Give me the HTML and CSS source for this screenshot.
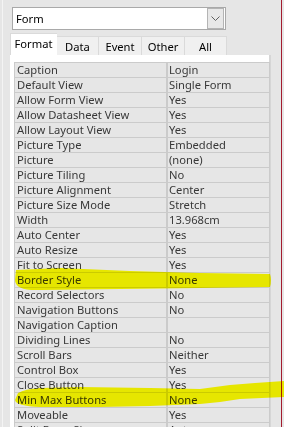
FILE: index.html
```html
<!DOCTYPE html>
<html lang="en">
<head>
  <meta charset="UTF-8">
  <meta name="viewport" content="width=device-width, initial-scale=1.0">
  <title>Property Sheet</title>
  <link rel="stylesheet" href="styles.css">
</head>
<body>
  <div class="window">
    <div class="pane">
      <div class="combo">
        <span class="combo-text">Form</span>
        <span class="combo-btn">
          <svg width="9" height="5" viewBox="0 0 9 5"><path d="M0.5 0.5 L4.5 4.5 L8.5 0.5" fill="none" stroke="#606060" stroke-width="1"/></svg>
        </span>
      </div>

      <div class="tabs">
        <div class="tab active">Format</div>
        <div class="tab">Data</div>
        <div class="tab">Event</div>
        <div class="tab">Other</div>
        <div class="tab">All</div>
      </div>

      <div class="panel">
        <div class="props">
          <div class="label">Caption</div><div class="value">Login</div>
          <div class="label">Default View</div><div class="value">Single Form</div>
          <div class="label">Allow Form View</div><div class="value">Yes</div>
          <div class="label">Allow Datasheet View</div><div class="value">Yes</div>
          <div class="label">Allow Layout View</div><div class="value">Yes</div>
          <div class="label">Picture Type</div><div class="value">Embedded</div>
          <div class="label">Picture</div><div class="value">(none)</div>
          <div class="label">Picture Tiling</div><div class="value">No</div>
          <div class="label">Picture Alignment</div><div class="value">Center</div>
          <div class="label">Picture Size Mode</div><div class="value">Stretch</div>
          <div class="label">Width</div><div class="value">13.968cm</div>
          <div class="label">Auto Center</div><div class="value">Yes</div>
          <div class="label">Auto Resize</div><div class="value">Yes</div>
          <div class="label">Fit to Screen</div><div class="value">Yes</div>
          <div class="label">Border Style</div><div class="value">None</div>
          <div class="label">Record Selectors</div><div class="value">No</div>
          <div class="label">Navigation Buttons</div><div class="value">No</div>
          <div class="label">Navigation Caption</div><div class="value"></div>
          <div class="label">Dividing Lines</div><div class="value">No</div>
          <div class="label">Scroll Bars</div><div class="value">Neither</div>
          <div class="label">Control Box</div><div class="value">Yes</div>
          <div class="label">Close Button</div><div class="value">Yes</div>
          <div class="label">Min Max Buttons</div><div class="value">None</div>
          <div class="label">Moveable</div><div class="value">Yes</div>
          <div class="label">Split Form Size</div><div class="value">Auto</div>
        </div>
      </div>
    </div>

    <!-- highlighter marks drawn over the sheet -->
    <svg class="marker" width="284" height="427" viewBox="0 0 284 427">
      <path d="M16 270 L60 268 L130 271 L200 273 L270 274 Q272 280 270 287 L200 288 L120 289 L40 290 Q15 291 15 280 Z" fill="#ffff00"/>
      <path d="M18 393 Q25 389 40 388 L80 387 L150 388 L200 389 L230 385 L255 383 L284 381 L284 397 L262 398 L240 399 L220 402 L200 404 L150 406 L100 407 L40 407 Q16 406 15 400 Z" fill="#ffff00"/>
    </svg>
  </div>
</body>
</html>
```

FILE: styles.css
```css
body {
  margin: 0;
  background: #e6e6e6;
  font-family: "Noto Sans", "Open Sans", sans-serif;
  font-size: 11.2px;
  color: #333;
}

.window {
  position: relative;
  height: 427px;
  overflow: hidden;
}

.pane {
  margin-left: 2px;
  width: 278px;
  height: 427px;
  border-left: 1px solid #f4f4f4;
  border-right: 1px solid #a31c2e;
  padding-top: 7px;
  box-sizing: content-box;
}

.combo {
  display: flex;
  justify-content: space-between;
  align-items: center;
  margin-left: 9px;
  width: 212px;
  height: 21px;
  background: #fff;
  border: 1px solid #a9a9a9;
}

.combo-text {
  padding-left: 3px;
  color: #000;
}

.combo-btn {
  display: flex;
  justify-content: center;
  align-items: center;
  width: 15px;
  height: 19px;
  margin-right: 1px;
  background: #e8e8e8;
  border: 1px solid #b4b4b4;
}

.tabs {
  display: flex;
  align-items: flex-end;
  margin: 3px 0 0 7px;
  height: 22px;
}

.tab {
  height: 18px;
  line-height: 19px;
  text-align: center;
  background: #f0f0f0;
  border: 1px solid #dadada;
  border-bottom: none;
  border-left: none;
  color: #000;
}

.tab:nth-child(2) { width: 41px; }
.tab:nth-child(3) { width: 42px; }
.tab:nth-child(4) { width: 42px; }
.tab:nth-child(5) { width: 41px; }

.tab.active {
  width: 45px;
  height: 21px;
  line-height: 20px;
  background: #fff;
  border-left: 1px solid #dadada;
  border-right: none;
  padding-right: 1px;
}

.panel {
  margin-left: 7px;
  width: 261px;
  height: 380px;
  background: #fff;
  border-right: 2px solid #d6d6d6;
  padding: 7px 0 0 4px;
  box-sizing: border-box;
}

.props {
  display: grid;
  grid-template-columns: 151px 101px;
  grid-auto-rows: 14px;
  column-gap: 2px;
  row-gap: 1px;
  width: 254px;
  background: #cbcbcb;
  border: 1px solid #cbcbcb;
}

.label,
.value {
  background: #e6e6e6;
  line-height: 14px;
  white-space: nowrap;
  color: #383838;
}

.label {
  padding-left: 2px;
}

.value {
  padding-left: 1px;
}

.marker {
  position: absolute;
  left: 0;
  top: 0;
  mix-blend-mode: multiply;
  pointer-events: none;
}
```
